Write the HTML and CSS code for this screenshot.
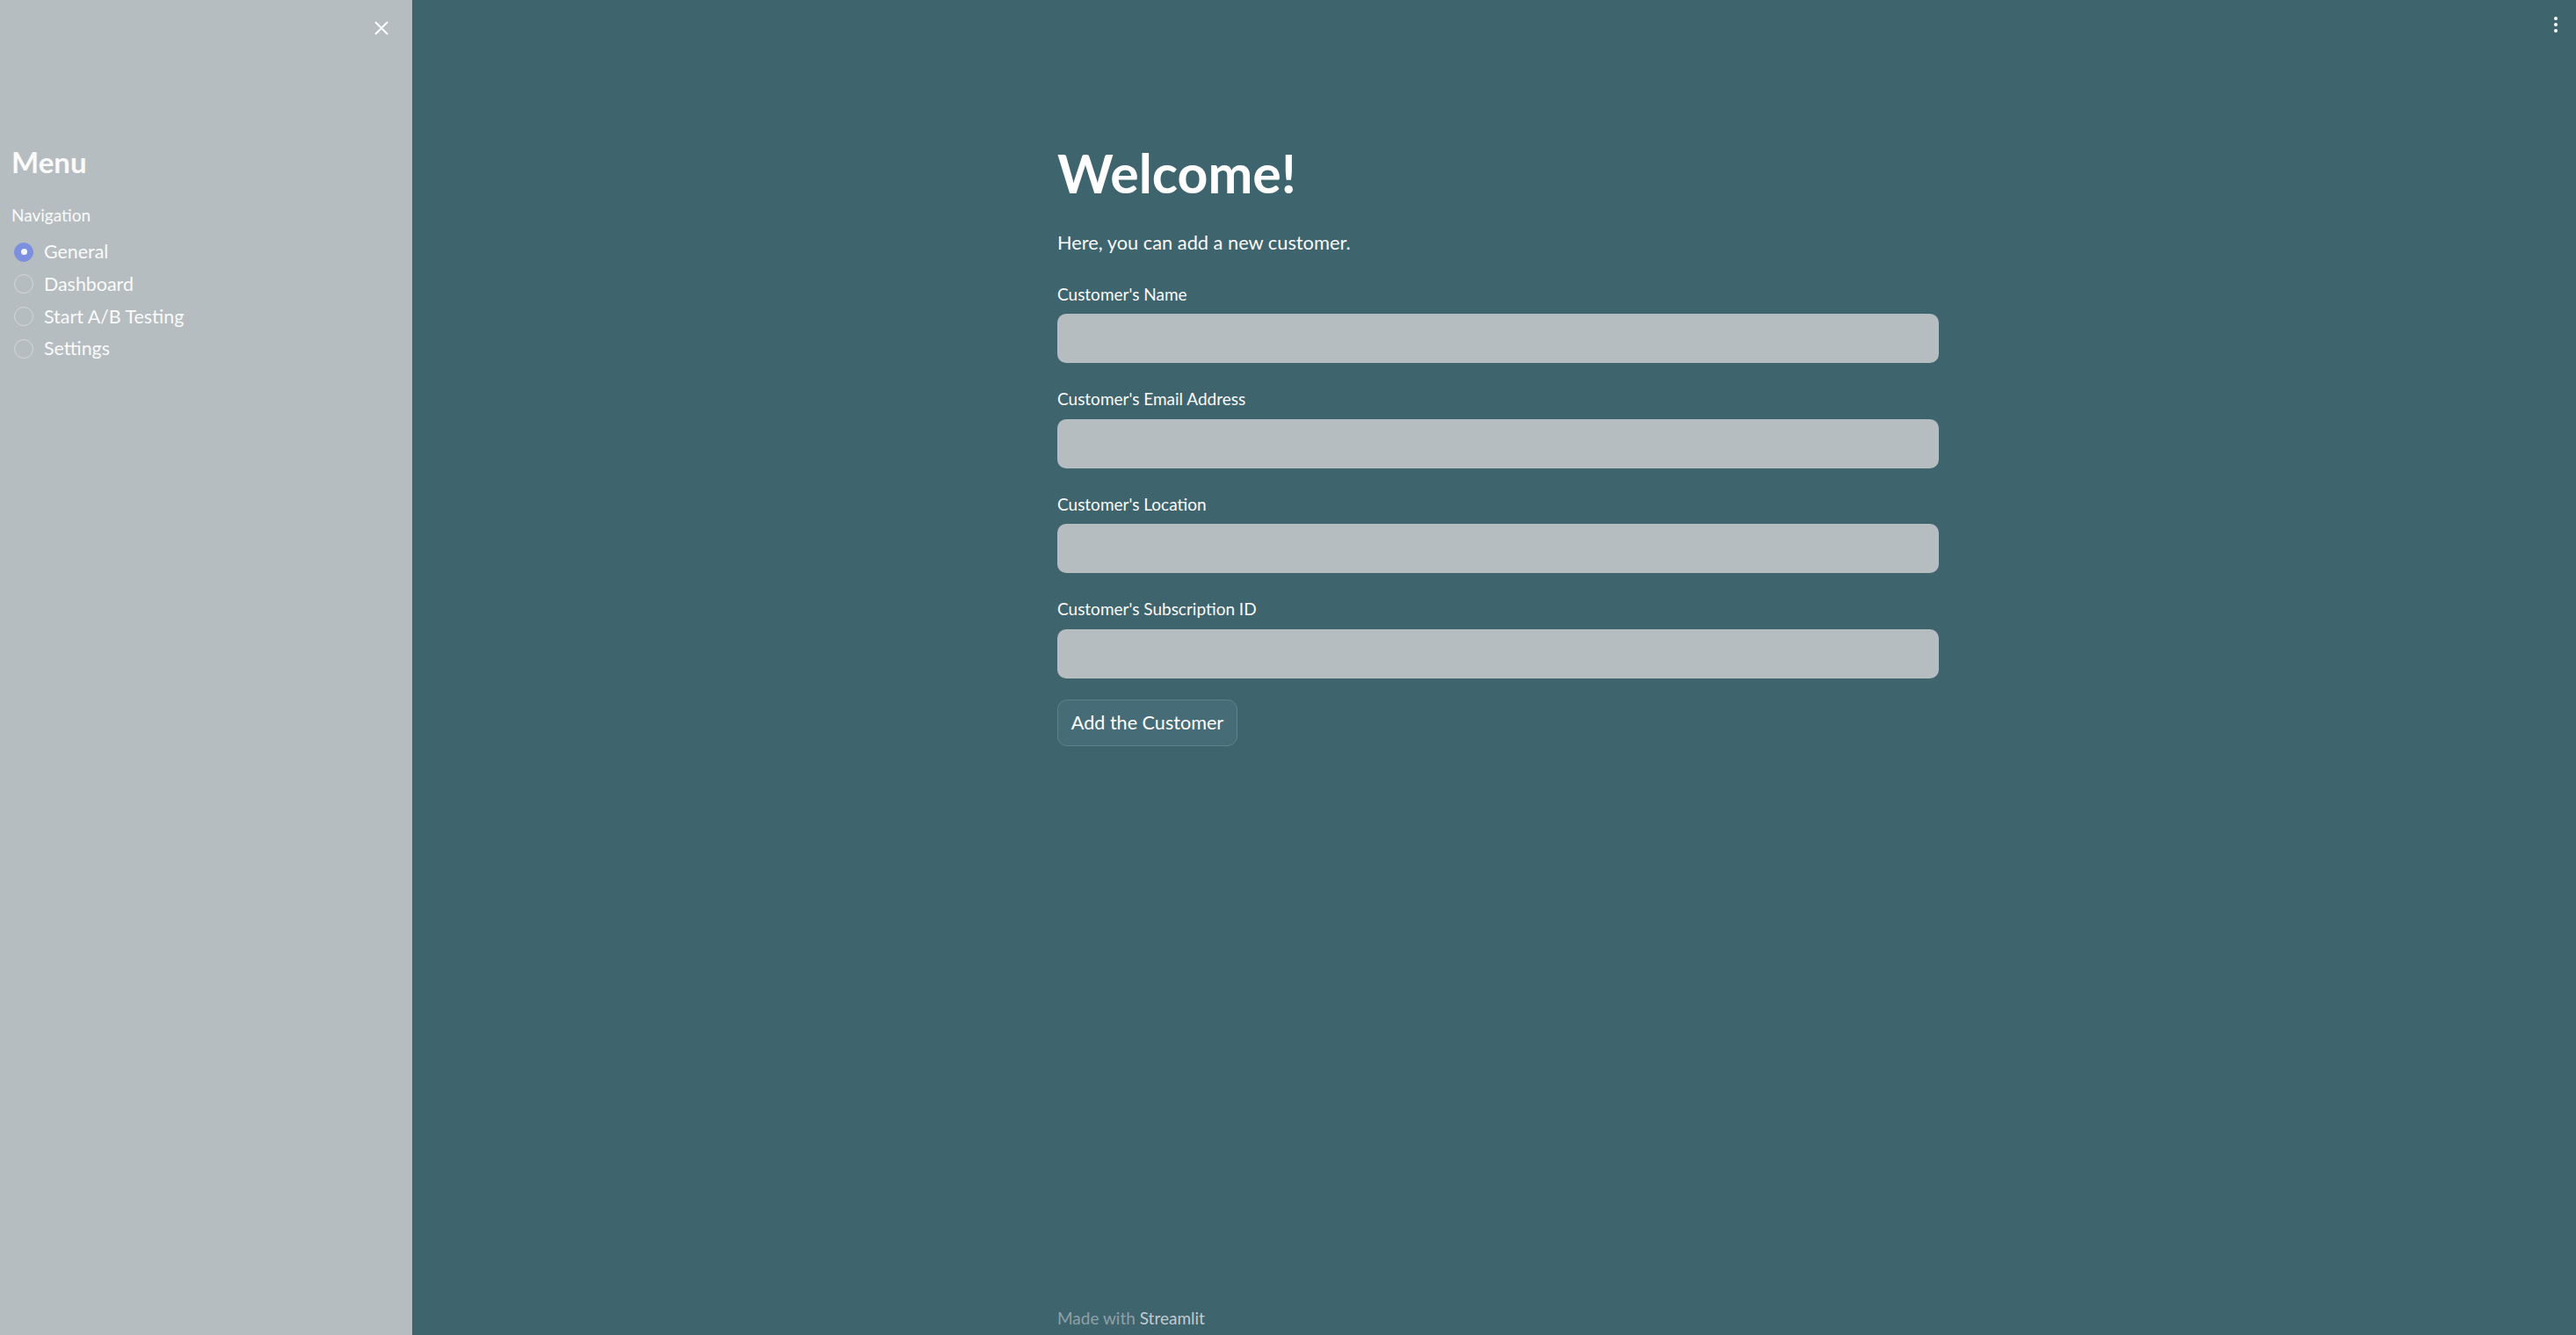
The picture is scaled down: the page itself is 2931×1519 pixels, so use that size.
FILE: index.html
```html
<!DOCTYPE html>
<html lang="en">
<head>
<meta charset="utf-8">
<title>Add Customer</title>
<link rel="stylesheet" href="styles.css">
</head>
<body>
<div class="app">
  <aside class="sidebar">
    <div class="sidebar-top">
      <button class="close-btn" aria-label="Close sidebar">
        <svg width="16" height="16" viewBox="0 0 16 16"><path d="M1 1 L15 15 M15 1 L1 15" stroke="#ffffff" stroke-width="2" fill="none"/></svg>
      </button>
    </div>
    <h2 class="menu-title">Menu</h2>
    <div class="nav-label">Navigation</div>
    <ul class="radio-list">
      <li class="radio-item selected"><span class="radio"></span><span class="radio-text">General</span></li>
      <li class="radio-item"><span class="radio"></span><span class="radio-text">Dashboard</span></li>
      <li class="radio-item"><span class="radio"></span><span class="radio-text">Start A/B Testing</span></li>
      <li class="radio-item"><span class="radio"></span><span class="radio-text">Settings</span></li>
    </ul>
  </aside>
  <main class="main">
    <button class="kebab" aria-label="Main menu"><span></span><span></span><span></span></button>
    <div class="content">
      <h1 class="title">Welcome!</h1>
      <p class="intro">Here, you can add a new customer.</p>
      <div class="field">
        <label class="field-label">Customer's Name</label>
        <div class="input"></div>
      </div>
      <div class="field">
        <label class="field-label">Customer's Email Address</label>
        <div class="input"></div>
      </div>
      <div class="field">
        <label class="field-label">Customer's Location</label>
        <div class="input"></div>
      </div>
      <div class="field">
        <label class="field-label">Customer's Subscription ID</label>
        <div class="input"></div>
      </div>
      <button class="submit">Add the Customer</button>
    </div>
    <footer class="footer">Made with <span class="brand">Streamlit</span></footer>
  </main>
</div>
</body>
</html>
```
FILE: styles.css
```css
* { box-sizing: border-box; }
html, body { margin: 0; padding: 0; height: 100%; }
body {
  font-family: "Lato", "Noto Sans", sans-serif;
  color: #fafafa;
  background: #3e646e;
}
.app {
  display: flex;
  height: 100vh;
}
.sidebar {
  width: 469px;
  flex: none;
  background: #b5bdc0;
  padding: 0 0 0 13px;
  display: flex;
  flex-direction: column;
}
.sidebar-top {
  height: 64px;
  display: flex;
  justify-content: flex-end;
  align-items: center;
  padding-right: 27px;
}
.close-btn {
  background: none;
  border: none;
  padding: 0;
  width: 16px;
  height: 16px;
  display: flex;
}
.menu-title {
  margin: 100px 0 0;
  font-size: 33px;
  line-height: 40.3px;
  font-weight: 700;
  color: #fafafa;
}
.nav-label {
  margin-top: 26.6px;
  font-size: 19px;
  line-height: 27.4px;
}
.radio-list {
  list-style: none;
  margin: 10px 0 0;
  padding: 0;
}
.radio-item {
  height: 36.7px;
  display: flex;
  align-items: center;
}
.radio {
  width: 22px;
  height: 22px;
  margin-left: 3px;
  border-radius: 50%;
  border: 1.5px solid #d3d8da;
  flex: none;
  display: flex;
  align-items: center;
  justify-content: center;
}
.radio-item.selected .radio {
  background: #7d8fdf;
  border-color: #7d8fdf;
}
.radio-item.selected .radio::after {
  content: "";
  width: 7px;
  height: 7px;
  border-radius: 50%;
  background: #f4f5fb;
}
.radio-text {
  margin-left: 12px;
  font-size: 21.4px;
  line-height: 36.7px;
  color: #fafafa;
}
.main {
  flex: 1;
  position: relative;
  display: flex;
  flex-direction: column;
  align-items: center;
  padding-left: 9px;
}
.kebab {
  position: absolute;
  top: 19px;
  right: 21px;
  background: none;
  border: none;
  padding: 0;
  display: flex;
  flex-direction: column;
  gap: 3px;
}
.kebab span {
  width: 4px;
  height: 4px;
  border-radius: 50%;
  background: #ffffff;
}
.content {
  width: 1003px;
  padding-top: 160px;
}
.title {
  margin: 0;
  font-size: 60.8px;
  line-height: 73.9px;
  font-weight: 700;
  color: #ffffff;
}
.intro {
  margin: 24px 0 0;
  font-size: 21.8px;
  line-height: 35.8px;
}
.field {
  margin-top: 27.2px;
}
.field-label {
  display: block;
  font-size: 19px;
  line-height: 27.4px;
}
.input {
  margin-top: 8.9px;
  height: 56px;
  border-radius: 10px;
  background: #b5bdc0;
}
.submit {
  margin-top: 24px;
  width: 205px;
  height: 53px;
  border-radius: 11px;
  background: #466d77;
  border: 1px solid #60828b;
  color: #ffffff;
  font-family: "Lato", "Noto Sans", sans-serif;
  font-size: 21.6px;
  padding: 0;
}
.footer {
  margin-top: auto;
  width: 1003px;
  padding-bottom: 6px;
  font-size: 19px;
  line-height: 27.4px;
  color: #8ea1a7;
}
.footer .brand {
  color: #c2cbce;
}
```
